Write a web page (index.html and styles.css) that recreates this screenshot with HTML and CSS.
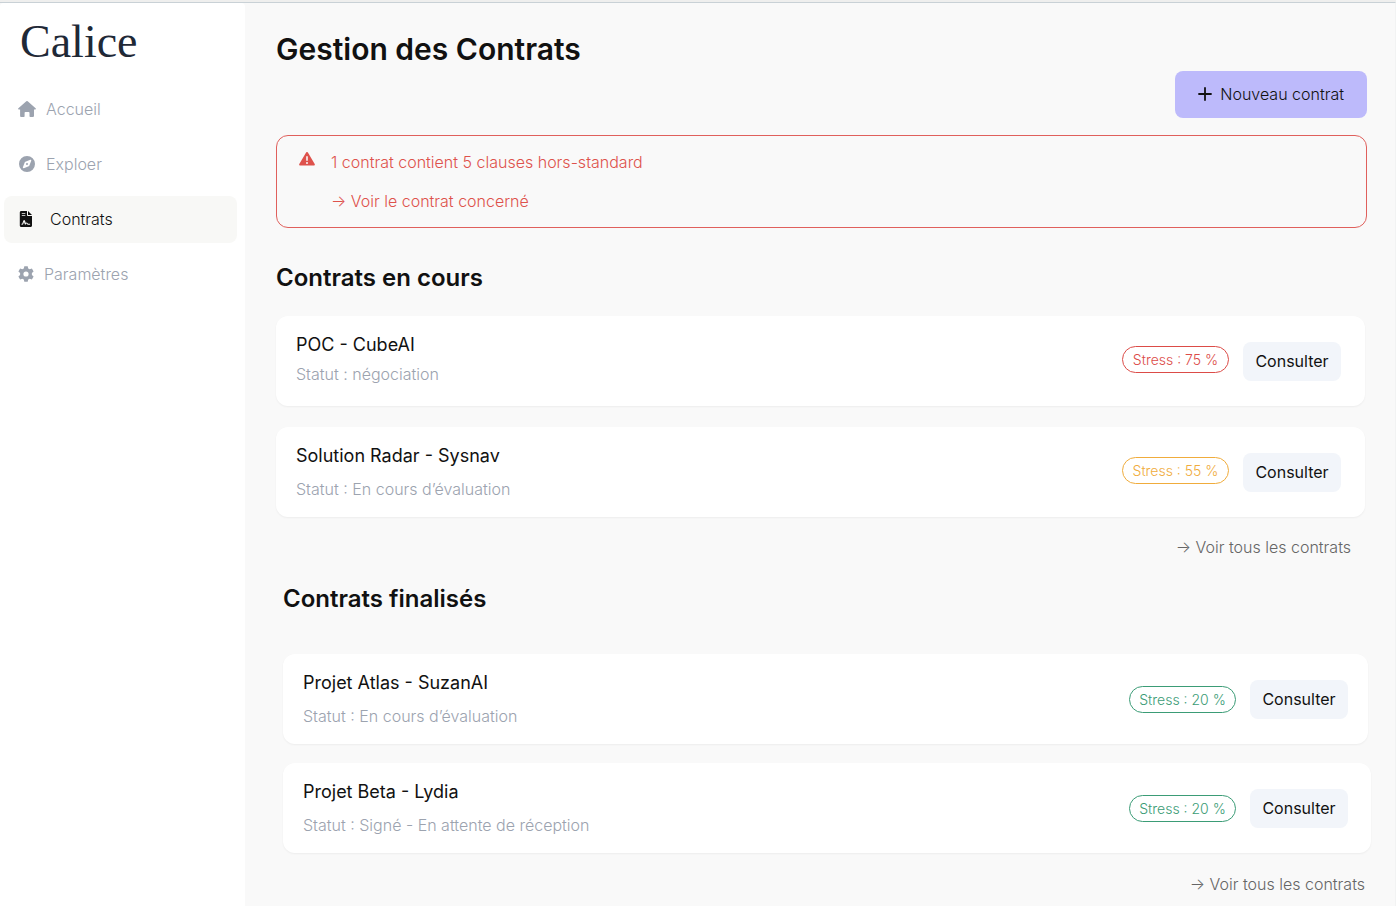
FILE: index.html
```html
<!DOCTYPE html>
<html lang="fr">
<head>
<meta charset="utf-8">
<meta name="viewport" content="width=device-width, initial-scale=1">
<title>Calice – Gestion des Contrats</title>
<link rel="stylesheet" href="styles.css">
</head>
<body>
<div class="app">
  <aside class="sidebar">
    <div class="logo">Calice</div>
    <nav class="nav" aria-label="Navigation principale">
      <a class="nav-item" href="#accueil">
        <svg class="nav-icon" viewBox="0 0 18 18" aria-hidden="true"><path fill="currentColor" d="M8.3 1.3a1.1 1.1 0 0 1 1.4 0l7.9 6.9c.6.5.3 1.3-.4 1.3H16v6.2c0 .8-.6 1.3-1.3 1.3h-2.4c-.5 0-.8-.3-.8-.8v-3.4c0-.5-.3-.8-.8-.8H7.4c-.5 0-.8.3-.8.8v3.4c0 .5-.3.8-.8.8H3.4c-.8 0-1.3-.5-1.3-1.3V9.5H.8c-.7 0-1-.8-.4-1.3z"/></svg>
        <span>Accueil</span>
      </a>
      <a class="nav-item" href="#exploer">
        <svg class="nav-icon" viewBox="0 0 18 18" aria-hidden="true"><path fill="currentColor" fill-rule="evenodd" d="M9 1a8 8 0 1 1 0 16A8 8 0 0 1 9 1zM12.3 4.8 7.4 6.7a1.200 1.200 0 0 0-.7.7L4.900 12.300c-.2.6.3 1.100.9.9l4.900-1.900c.3-.1.6-.4.7-.7l1.800-4.900c.2-.6-.3-1.100-.9-.9zM9 8a1 1 0 1 1 0 2 1 1 0 0 1 0-2z"/></svg>
        <span>Exploer</span>
      </a>
      <a class="nav-item nav-item-active" href="#contrats" aria-current="page">
        <svg class="nav-icon nav-icon-small" viewBox="1 1 16 16" aria-hidden="true"><path fill="currentColor" fill-rule="evenodd" d="M4.300 1H10v4.200c0 .5.3.8.8.8H15v9.500c0 .9-.6 1.500-1.500 1.500H4.300c-.9 0-1.500-.6-1.500-1.500v-13C2.800 1.600 3.400 1 4.300 1zM4.800 3.200v.8h3.500v-.8zM4.800 5.300v.8h3.500v-.8zM4.500 13.700v1h.7c.6 0 1-.4 1.200-.9l.6-1.800.8 2.200c.2.5.7.6 1 .1l.6-1c.3.9.8 1.400 1.700 1.400h2v-1h-1.900c-.4 0-.5-.2-.7-.6-.4-.9-1.300-.9-1.700-.2l-.9-2.300c-.3-.7-1.200-.7-1.500 0l-1.100 2.900c-.1.2-.2.2-.4.2zM11 1l4 4h-4z"/></svg>
        <span>Contrats</span>
      </a>
      <a class="nav-item" href="#parametres">
        <svg class="nav-icon nav-icon-small" viewBox="1 1 16 16" aria-hidden="true"><path fill="currentColor" fill-rule="evenodd" d="M7.300 1.200h3.400l.5 2.200 1.500.9 2.200-.7 1.700 2.900-1.700 1.600v1.800l1.700 1.600-1.700 2.900-2.200-.7-1.500.9-.5 2.200H7.300l-.5-2.200-1.500-.9-2.200.7-1.700-2.900 1.700-1.600V8.100L1.400 6.500l1.700-2.900 2.200.7 1.500-.9zM9 6.400a2.600 2.600 0 1 0 0 5.200 2.600 2.600 0 0 0 0-5.200z"/></svg>
        <span>Paramètres</span>
      </a>
    </nav>
  </aside>

  <main class="main">
    <header class="page-header">
      <h1 class="page-title">Gestion des Contrats</h1>
      <button class="new-button" type="button">
        <svg class="plus-icon" viewBox="0 0 14 14" aria-hidden="true"><path d="M7 1v12M1 7h12" fill="none" stroke="currentColor" stroke-width="1.800" stroke-linecap="round"/></svg>
        Nouveau contrat
      </button>
    </header>

    <section class="alert" role="alert">
      <svg class="alert-icon" viewBox="0 1 16 16" aria-hidden="true"><path fill="currentColor" fill-rule="evenodd" d="M7.100 1.500c.4-.7 1.400-.7 1.800 0l6.800 11.600c.4.7-.1 1.500-.9 1.500H1.200c-.8 0-1.300-.8-.9-1.500zM7.200 5.200v4.600h1.600V5.200zM8 10.900a1 1 0 1 0 0 2 1 1 0 0 0 0-2z"/></svg>
      <div class="alert-body">
        <p class="alert-text">1 contrat contient 5 clauses hors-standard</p>
        <a class="alert-link" href="#concerne">→ Voir le contrat concerné</a>
      </div>
    </section>

    <section class="group group-current">
      <h2 class="group-title">Contrats en cours</h2>
      <div class="card-list">
        <article class="card">
          <div class="card-info card-info-tight">
            <h3 class="card-title">POC - CubeAI</h3>
            <p class="card-status">Statut : négociation</p>
          </div>
          <span class="badge badge-high">Stress : 75 %</span>
          <button class="view-button" type="button">Consulter</button>
        </article>
        <article class="card">
          <div class="card-info">
            <h3 class="card-title">Solution Radar - Sysnav</h3>
            <p class="card-status">Statut : En cours d’évaluation</p>
          </div>
          <span class="badge badge-medium">Stress : 55 %</span>
          <button class="view-button" type="button">Consulter</button>
        </article>
      </div>
      <a class="all-link" href="#en-cours">→ Voir tous les contrats</a>
    </section>

    <section class="group group-done">
      <h2 class="group-title">Contrats finalisés</h2>
      <div class="card-list">
        <article class="card">
          <div class="card-info">
            <h3 class="card-title">Projet Atlas - SuzanAI</h3>
            <p class="card-status">Statut : En cours d’évaluation</p>
          </div>
          <span class="badge badge-low">Stress : 20 %</span>
          <button class="view-button" type="button">Consulter</button>
        </article>
        <article class="card card-wide">
          <div class="card-info">
            <h3 class="card-title">Projet Beta - Lydia</h3>
            <p class="card-status">Statut : Signé - En attente de réception</p>
          </div>
          <span class="badge badge-low">Stress : 20 %</span>
          <button class="view-button" type="button">Consulter</button>
        </article>
      </div>
      <a class="all-link" href="#finalises">→ Voir tous les contrats</a>
    </section>
  </main>
</div>
</body>
</html>
```
FILE: styles.css
```css
*,
*::before,
*::after {
  box-sizing: border-box;
}

body {
  margin: 0;
  border-top: 2px solid #efefee;
  background: #f9f9f9;
  color: #111;
  font-family: Inter, "Liberation Sans", sans-serif;
  font-size: 16px;
  font-weight: 300;
  line-height: 20px;
}

h1, h2, h3, p {
  margin: 0;
}

a {
  color: inherit;
  text-decoration: none;
}

button {
  border: 0;
  color: inherit;
  font: inherit;
  cursor: pointer;
}

.app {
  display: flex;
  min-height: calc(100vh - 2px);
  border-top: 1px solid #c9d1d6;
  border-right: 1px solid #f2f3f3;
}

.sidebar {
  flex: 0 0 245px;
  padding: 12px 8px 0 4px;
  border-radius: 4px 4px 0 0;
  background: #fff;
}

.logo {
  padding-left: 16px;
  color: #1f2937;
  font-family: "Liberation Serif", serif;
  font-size: 46px;
  font-weight: 400;
  line-height: 54px;
}

.nav {
  display: flex;
  flex-direction: column;
  gap: 8px;
  margin-top: 17px;
}

.nav-item {
  display: flex;
  align-items: center;
  gap: 10px;
  height: 47px;
  padding: 0 0 2px 14px;
  border-radius: 8px;
  color: #9ca3af;
}

.nav-item-active {
  gap: 16px;
  background: #f8f8f6;
  color: #111;
}

.nav-icon {
  width: 18px;
  height: 18px;
}

.nav-icon-small {
  width: 16px;
  height: 16px;
}

.main {
  flex: 1;
  min-width: 0;
  padding: 28px 27px 10px 31px;
}

.page-header {
  display: flex;
  flex-direction: column;
  padding-right: 1px;
}

.page-title {
  font-size: 30px;
  font-weight: 600;
  line-height: 36px;
}

.new-button {
  display: flex;
  align-self: flex-end;
  align-items: center;
  gap: 8px;
  height: 47px;
  margin-top: 4px;
  padding: 0 23px 2px;
  border-radius: 8px;
  background: #bdbafb;
}

.plus-icon {
  width: 14px;
  height: 14px;
}

.alert {
  display: flex;
  gap: 16px;
  margin: 17px 1px 0 0;
  padding: 16px 22px;
  border: 1px solid #e0605c;
  border-radius: 12px;
  color: #de524c;
}

.alert-icon {
  width: 16px;
  height: 16px;
}

.alert-body {
  display: flex;
  flex-direction: column;
  gap: 19px;
}

.group {
  display: flex;
  flex-direction: column;
}

.group-current {
  margin-top: 34px;
  padding-right: 3px;
}

.group-done {
  margin-top: 26px;
  padding-left: 7px;
}

.group-title {
  font-size: 24px;
  font-weight: 600;
  line-height: 32px;
}

.card-list {
  display: flex;
  flex-direction: column;
  gap: 21px;
  margin-top: 22px;
}

.group-done .card-list {
  gap: 19px;
  margin-top: 39px;
}

.card {
  display: flex;
  align-items: center;
  gap: 14px;
  height: 90px;
  padding: 0 24px 0 20px;
  border-radius: 12px;
  background: #fff;
  box-shadow: 0 1px 2px rgba(0, 0, 0, 0.05);
}

.group-done .card {
  padding-right: 20px;
}

.group-done .card-wide {
  margin-right: -3px;
  padding-right: 23px;
}

.card-info {
  display: flex;
  flex: 1;
  flex-direction: column;
  gap: 12px;
}

.card-info-tight {
  gap: 8px;
  padding-bottom: 4px;
}

.card-title {
  font-size: 18px;
  font-weight: 400;
  line-height: 22px;
}

.card-status {
  color: #9ca3af;
}

.badge {
  min-width: 107px;
  padding: 0 9px;
  border: 1px solid;
  border-radius: 14px;
  font-size: 14px;
  line-height: 25px;
  text-align: center;
  white-space: nowrap;
}

.group-current .badge {
  margin-bottom: 3px;
}

.badge-high {
  color: #dc4c48;
}

.badge-medium {
  color: #f0ac3c;
}

.badge-low {
  color: #3b9c76;
}

.view-button {
  min-width: 98px;
  height: 39px;
  padding: 0 12px;
  border-radius: 8px;
  background: #f2f5fa;
  font-weight: 400;
}

.all-link {
  align-self: flex-end;
  margin-top: 20px;
  padding-right: 14px;
  color: #666;
}

.group-done .all-link {
  margin-top: 21px;
  padding-right: 3px;
}
```
